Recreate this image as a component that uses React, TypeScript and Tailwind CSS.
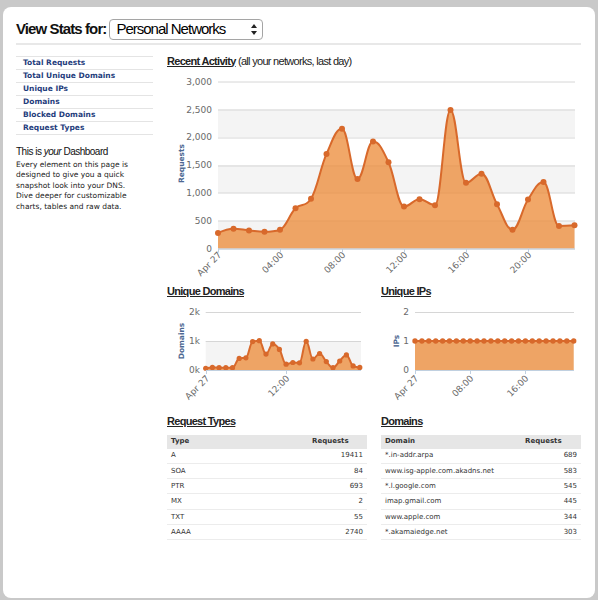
import React from 'react';

type Pt = { x: number; y: number };

const recent = [280, 356, 325, 300, 338, 723, 892, 1700, 2150, 1248, 1920, 1550, 754, 886, 778, 2490, 1181, 1344, 796, 338, 880, 1193, 403, 416];
const domains = [60, 90, 80, 80, 80, 400, 420, 980, 1010, 550, 900, 710, 200, 260, 250, 990, 380, 570, 290, 80, 310, 520, 140, 90];
const ips = Array(24).fill(1);

const requestTypes = [
  ['A', '19411'],
  ['SOA', '84'],
  ['PTR', '693'],
  ['MX', '2'],
  ['TXT', '55'],
  ['AAAA', '2740'],
];

const topDomains = [
  ['*.in-addr.arpa', '689'],
  ['www.isg-apple.com.akadns.net', '583'],
  ['*.l.google.com', '545'],
  ['imap.gmail.com', '445'],
  ['www.apple.com', '344'],
  ['*.akamaiedge.net', '303'],
];

const navItems = ['Total Requests', 'Total Unique Domains', 'Unique IPs', 'Domains', 'Blocked Domains', 'Request Types'];

const r1 = (n: number) => Math.round(n * 10) / 10;

// highcharts-like spline smoothing
function splinePath(pts: Pt[]) {
  const smoothing = 1.5;
  const denom = smoothing + 1;
  const conts = pts.map((p, i) => {
    if (i === 0 || i === pts.length - 1) return { lx: p.x, ly: p.y, rx: p.x, ry: p.y };
    const a = pts[i - 1];
    const b = pts[i + 1];
    const lx = (smoothing * p.x + a.x) / denom;
    let ly = (smoothing * p.y + a.y) / denom;
    const rx = (smoothing * p.x + b.x) / denom;
    let ry = (smoothing * p.y + b.y) / denom;
    const corr = ((ry - ly) * (rx - p.x)) / (rx - lx) + p.y - ry;
    ly += corr;
    ry += corr;
    if (ly > a.y && ly > p.y) {
      ly = Math.max(a.y, p.y);
      ry = 2 * p.y - ly;
    } else if (ly < a.y && ly < p.y) {
      ly = Math.min(a.y, p.y);
      ry = 2 * p.y - ly;
    }
    if (ry > b.y && ry > p.y) {
      ry = Math.max(b.y, p.y);
      ly = 2 * p.y - ry;
    } else if (ry < b.y && ry < p.y) {
      ry = Math.min(b.y, p.y);
      ly = 2 * p.y - ry;
    }
    return { lx, ly, rx, ry };
  });
  let d = `M ${r1(pts[0].x)} ${r1(pts[0].y)}`;
  for (let i = 1; i < pts.length; i++) {
    const c0 = conts[i - 1];
    const c1 = conts[i];
    d += ` C ${r1(c0.rx)} ${r1(c0.ry)} ${r1(c1.lx)} ${r1(c1.ly)} ${r1(pts[i].x)} ${r1(pts[i].y)}`;
  }
  return d;
}

type ChartProps = {
  view: [number, number, number, number];
  data: number[];
  x0: number;
  dx: number;
  zeroY: number;
  unit: number;
  ticks: { v: number; label: string }[];
  bands: [number, number][];
  gridEnd: number;
  labelRight: number;
  xLabels: { i: number; label: string }[];
  labelDrop: number;
  axisTitle: string;
  titleX: number;
  titleY: number;
  r: number;
};

function AreaChart(props: ChartProps) {
  const { view, data, x0, dx, zeroY, unit, ticks, bands, gridEnd, labelRight, xLabels, labelDrop, axisTitle, titleX, titleY, r } = props;
  const [vx, vy, vw, vh] = view;
  const pts = data.map((v, i) => ({ x: x0 + i * dx, y: zeroY - v * unit }));
  const line = splinePath(pts);
  const last = pts[pts.length - 1];
  const area = `${line} L ${r1(last.x)} ${zeroY} L ${r1(pts[0].x)} ${zeroY} Z`;

  return (
    <svg width={vw} height={vh} viewBox={`${vx} ${vy} ${vw} ${vh}`} className="block font-['DejaVu_Sans',sans-serif]">
      {bands.map(([a, b]) => (
        <rect key={`b${a}`} x={x0} y={zeroY - b * unit} width={gridEnd - x0} height={(b - a) * unit} fill="#f4f4f4" />
      ))}
      {ticks.map((t) => (
        <line key={`g${t.v}`} x1={x0} x2={gridEnd} y1={Math.round(zeroY - t.v * unit) + 0.5} y2={Math.round(zeroY - t.v * unit) + 0.5} stroke="#d6d6d6" strokeWidth={1} />
      ))}
      <path d={area} fill="#ec8a36" fillOpacity={0.75} />
      <path d={line} fill="none" stroke="#d8692b" strokeWidth={2} />
      {pts.map((p, i) => (
        <circle key={`p${i}`} cx={r1(p.x)} cy={r1(p.y)} r={r} fill="#d8692b" />
      ))}
      <line x1={x0} x2={gridEnd} y1={zeroY + 0.5} y2={zeroY + 0.5} stroke="#c0d0e0" strokeWidth={1} />
      {ticks.map((t) => (
        <text key={`y${t.v}`} x={labelRight} y={r1(zeroY - t.v * unit + 3.2)} textAnchor="end" fontSize={9} fill="#6a6a6a">
          {t.label}
        </text>
      ))}
      <text x={titleX} y={titleY} textAnchor="middle" fontSize={7.5} fontWeight="bold" fill="#4d6892" transform={`rotate(-90 ${titleX} ${titleY})`}>
        {axisTitle}
      </text>
      {xLabels.map((l) => {
        const tx = Math.round(x0 + l.i * dx);
        return (
          <line key={`t${l.i}`} x1={tx + 0.5} x2={tx + 0.5} y1={zeroY} y2={zeroY + 4} stroke="#c0d0e0" strokeWidth={1} />
        );
      })}
      {xLabels.map((l) => {
        const px = Math.round(x0 + l.i * dx) + 4;
        const py = zeroY + labelDrop;
        return (
          <text key={`l${l.label}`} x={px} y={py} textAnchor="end" fontSize={9} fill="#6a6a6a" transform={`rotate(-45 ${px} ${py})`}>
            {l.label}
          </text>
        );
      })}
    </svg>
  );
}

function SectionTitle({ children }: { children: React.ReactNode }) {
  return (
    <div className="h-[13px] leading-[13px] whitespace-nowrap font-['Liberation_Sans',Arial,sans-serif] text-[11px] tracking-[-0.7px] text-[#222]">
      {children}
    </div>
  );
}

function DataTable({ head, rows, col2 }: { head: [string, string]; rows: string[][]; col2: number }) {
  return (
    <div className="mt-[7px] w-[200px] text-[7px] text-[#333]">
      <div className="flex h-[14px] items-center bg-[#e6e6e6] font-bold">
        <div className="flex-1 pl-[4px]">{head[0]}</div>
        <div className="pl-[4px]" style={{ width: col2 }}>{head[1]}</div>
      </div>
      {rows.map(([a, b]) => (
        <div key={a} className="flex h-[15.3px] items-center border-b border-[#ececec]">
          <div className="flex-1 pl-[4px]">{a}</div>
          <div className="pr-[4px] text-right">{b}</div>
        </div>
      ))}
    </div>
  );
}

export default function App() {
  return (
    <div className="h-[600px] w-[598px] bg-[#c9c9c9] pt-[7px] pl-[3px] pr-[3px] pb-[2px] font-['DejaVu_Sans',sans-serif]">
      <div className="h-full rounded-[8px] bg-white pl-[13px] pr-[14px]">
        {/* header */}
        <div className="flex h-[33px] items-end">
          <div className="flex h-[21px] items-center gap-[3px] font-['Liberation_Sans',Arial,sans-serif]">
            <span className="text-[15px] font-bold tracking-[-0.9px] text-[#111]">View Stats for:</span>
            <div className="flex h-[21px] w-[154px] items-center justify-between rounded-[4px] border border-[#a5a5a5] bg-white pl-[6px] pr-[5px]">
              <span className="text-[15px] tracking-[-1px] text-black">Personal Networks</span>
              <svg width="6" height="11" viewBox="0 0 6 11">
                <path d="M3 0 L6 4 L0 4 Z" fill="#222" />
                <path d="M0 7 L6 7 L3 11 Z" fill="#222" />
              </svg>
            </div>
          </div>
        </div>
        <div className="mt-[3px] h-[2px] bg-[#e8e8e8]" />

        <div className="flex gap-[14px]">
          {/* sidebar */}
          <div className="w-[137px] shrink-0">
            <ul className="mt-[11px] border-t border-[#e4e4e4]">
              {navItems.map((n) => (
                <li key={n} className="flex h-[13px] items-center border-b border-[#e4e4e4] pl-[7px] text-[7.5px] font-bold text-[#1f3d7c]">
                  {n}
                </li>
              ))}
            </ul>
            <div className="mt-[11px] h-[12px] leading-[12px] font-['Liberation_Sans',Arial,sans-serif] text-[10px] tracking-[-0.5px] text-[#111]">
              This is <i>your</i> Dashboard
            </div>
            <p className="mt-[1.5px] whitespace-nowrap text-[7.5px] leading-[10.5px] text-[#222]">
              Every element on this page is
              <br />
              designed to give you a quick
              <br />
              snapshot look into your DNS.
              <br />
              Dive deeper for customizable
              <br />
              charts, tables and raw data.
            </p>
          </div>

          {/* main */}
          <div className="w-[414px]">
            <div className="mt-[9.5px]">
              <SectionTitle>
                <span className="font-bold underline">Recent Activity</span> (all your networks, last day)
              </SectionTitle>
            </div>
            <AreaChart
              view={[167, 67.5, 414, 217.5]}
              data={recent}
              x0={218}
              dx={15.5}
              zeroY={248}
              unit={167 / 3000}
              ticks={[0, 500, 1000, 1500, 2000, 2500, 3000].map((v) => ({ v, label: v === 0 ? '0' : v.toLocaleString('en-US') }))}
              bands={[
                [0, 500],
                [1000, 1500],
                [2000, 2500],
              ]}
              gridEnd={575}
              labelRight={212}
              xLabels={[
                { i: 0, label: 'Apr 27' },
                { i: 4, label: '04:00' },
                { i: 8, label: '08:00' },
                { i: 12, label: '12:00' },
                { i: 16, label: '16:00' },
                { i: 20, label: '20:00' },
              ]}
              labelDrop={7}
              axisTitle="Requests"
              titleX={184}
              titleY={163}
              r={3}
            />

            <div className="flex gap-[14px]">
              <div className="w-[200px]">
                <SectionTitle>
                  <span className="font-bold underline">Unique Domains</span>
                </SectionTitle>
                <AreaChart
                  view={[167, 298, 200, 111]}
                  data={domains}
                  x0={205.7}
                  dx={6.7}
                  zeroY={370}
                  unit={0.029}
                  ticks={[
                    { v: 0, label: '0k' },
                    { v: 1000, label: '1k' },
                    { v: 2000, label: '2k' },
                  ]}
                  bands={[[0, 1000]]}
                  gridEnd={361}
                  labelRight={200}
                  xLabels={[
                    { i: 0, label: 'Apr 27' },
                    { i: 12, label: '12:00' },
                  ]}
                  labelDrop={9}
                  axisTitle="Domains"
                  titleX={184}
                  titleY={341}
                  r={2.6}
                />
              </div>
              <div className="w-[200px]">
                <SectionTitle>
                  <span className="font-bold underline">Unique IPs</span>
                </SectionTitle>
                <AreaChart
                  view={[381, 298, 200, 111]}
                  data={ips}
                  x0={415}
                  dx={6.9}
                  zeroY={370}
                  unit={29}
                  ticks={[
                    { v: 0, label: '0' },
                    { v: 1, label: '1' },
                    { v: 2, label: '2' },
                  ]}
                  bands={[[0, 1]]}
                  gridEnd={574}
                  labelRight={409}
                  xLabels={[
                    { i: 0, label: 'Apr 27' },
                    { i: 8, label: '08:00' },
                    { i: 16, label: '16:00' },
                  ]}
                  labelDrop={9}
                  axisTitle="IPs"
                  titleX={398.5}
                  titleY={341}
                  r={2.7}
                />
              </div>
            </div>

            <div className="mt-[5.5px] flex gap-[14px]">
              <div className="w-[200px]">
                <SectionTitle>
                  <span className="font-bold underline">Request Types</span>
                </SectionTitle>
                <DataTable head={['Type', 'Requests']} rows={requestTypes} col2={59} />
              </div>
              <div className="w-[200px]">
                <SectionTitle>
                  <span className="font-bold underline">Domains</span>
                </SectionTitle>
                <DataTable head={['Domain', 'Requests']} rows={topDomains} col2={60} />
              </div>
            </div>
          </div>
        </div>
      </div>
    </div>
  );
}
